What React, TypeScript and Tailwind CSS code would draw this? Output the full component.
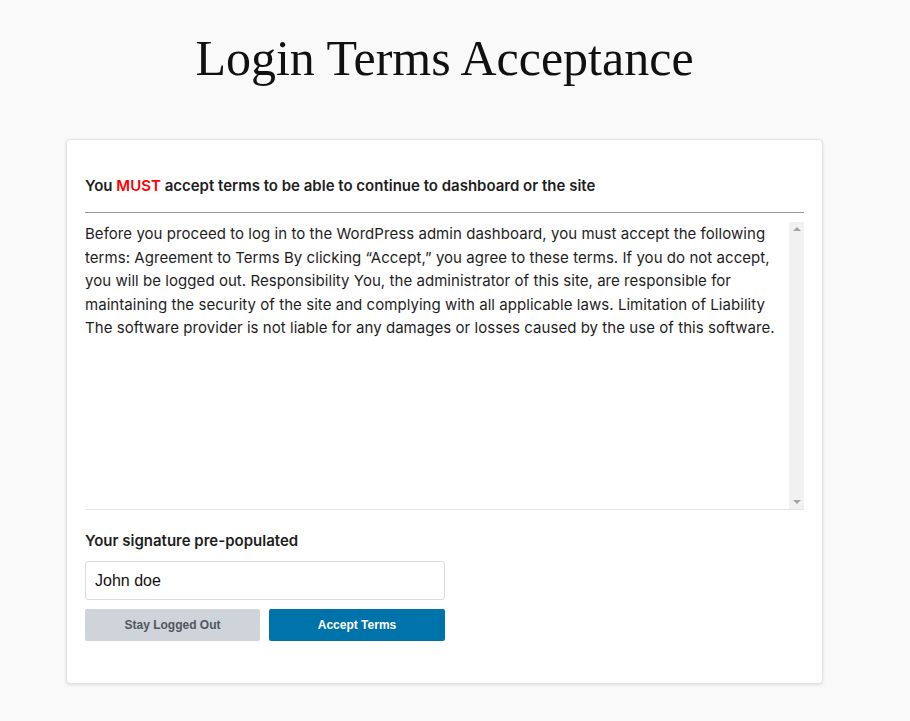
import React from "react";

export default function App() {
  const inter = { fontFamily: "Inter, 'Noto Sans', sans-serif" } as React.CSSProperties;
  return (
    <div className="min-h-[721px] w-full bg-[#f9f9f9] text-[#1e1e1e]">
      <div className="w-[889px] flex flex-col items-center">
        <h1
          className="mt-[26px] text-[50px] leading-[64px] font-normal text-[#111]"
          style={{ fontFamily: "'Liberation Serif', 'DejaVu Serif', serif" }}
        >
          Login Terms Acceptance
        </h1>
        <div
          className="mt-[49px] w-[757px] bg-white border border-[#e2e2e2] rounded-[4px] shadow-[0_1px_3px_rgba(0,0,0,0.12)] px-[18px] pt-[34px] pb-[42px]"
          style={inter}
        >
          <p className="text-[15px] leading-[24px] font-semibold text-[#1e1e1e]">
            You <span className="text-[#ff0000]">MUST</span> accept terms to be able to continue to dashboard or the site
          </p>
          <div className="mt-[14px] h-px bg-[#999]" />
          <div className="mt-[9px] h-[288px] flex border-b border-[#e5e5e5]">
            <div className="flex-1 overflow-hidden text-[15px] leading-[23.5px] tracking-[0.05px] text-[#1e1e1e] pr-[4px]">
              Before you proceed to log in to the WordPress admin dashboard, you must accept the following terms: Agreement to Terms By clicking “Accept,” you agree to these terms. If you do not accept, you will be logged out. Responsibility You, the administrator of this site, are responsible for maintaining the security of the site and complying with all applicable laws. Limitation of Liability The software provider is not liable for any damages or losses caused by the use of this software.
            </div>
            <div className="w-[15px] bg-[#f1f1f1] flex flex-col justify-between items-center py-[5px]">
              <div className="w-0 h-0 border-l-[4px] border-r-[4px] border-b-[4px] border-l-transparent border-r-transparent border-b-[#a3a3a3]" />
              <div className="w-0 h-0 border-l-[4px] border-r-[4px] border-t-[4px] border-l-transparent border-r-transparent border-t-[#a3a3a3]" />
            </div>
          </div>
          <p className="mt-[19px] text-[15px] leading-[24px] font-semibold text-[#1e1e1e]">
            Your signature pre-populated
          </p>
          <input
            readOnly
            value="John doe"
            className="mt-[8px] block w-[360px] h-[39px] border border-[#dcdcdc] rounded-[3px] px-[9px] text-[16px] text-[#111] outline-none"
            style={{ fontFamily: "'Liberation Sans', Arial, sans-serif" }}
          />
          <div className="mt-[9px] flex gap-[9px]" style={{ fontFamily: "'Liberation Sans', Arial, sans-serif" }}>
            <button className="w-[175px] h-[32px] rounded-[2px] bg-[#cfd3da] text-[12px] font-bold text-[#50575e]">
              Stay Logged Out
            </button>
            <button className="w-[176px] h-[32px] rounded-[2px] bg-[#0073aa] text-[12px] font-bold text-white">
              Accept Terms
            </button>
          </div>
        </div>
      </div>
    </div>
  );
}
